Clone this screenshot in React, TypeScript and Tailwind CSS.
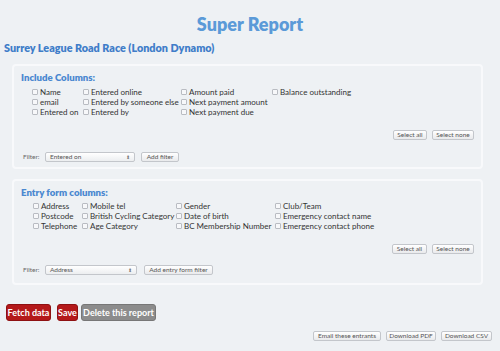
import React from "react";

const font = { fontFamily: "Lato, 'Open Sans', sans-serif" };

function Cb({ label }: { label: string }) {
  return (
    <div className="flex items-center h-[10px] whitespace-nowrap">
      <span className="inline-block w-[6px] h-[6px] rounded-[1px] border border-[#b9bcc2] bg-[#f7f8fa] mr-[2px] shrink-0" />
      <span className="text-[8px] leading-none text-[#333]">{label}</span>
    </div>
  );
}

function SmallBtn({ children, cls = "" }: { children: React.ReactNode; cls?: string }) {
  return (
    <div
      className={`h-[10px] px-[4px] flex items-center justify-center border border-[#c3c6cb] rounded-[2px] bg-gradient-to-b from-white to-[#e9eaec] text-[6.5px] leading-none text-[#555] whitespace-nowrap ${cls}`}
    >
      {children}
    </div>
  );
}

function Select({ value, w }: { value: string; w: string }) {
  return (
    <div
      className={`${w} h-[10px] flex items-center justify-between px-[4px] border border-[#c3c6cb] rounded-[2px] bg-gradient-to-b from-white to-[#eceef0] text-[6.5px] leading-none text-[#555]`}
    >
      <span>{value}</span>
      <span className="text-[5px] leading-none text-[#777]">⬍</span>
    </div>
  );
}

export default function App() {
  return (
    <div className="w-[500px] h-[351px] bg-[#eef1f4] overflow-hidden" style={font}>
      <div className="pt-[15px] text-center text-[18px] leading-[18px] font-extrabold text-[#5b9ad8]">Super Report</div>
      <div className="mt-[9px] ml-[4px] text-[10.8px] leading-[12px] font-extrabold text-[#3f7dc9]">
        Surrey League Road Race (London Dynamo)
      </div>

      {/* Box 1 */}
      <div className="mt-[10px] ml-[12px] w-[471px] h-[105px] rounded-[4px] border-2 border-[#f8f9fb] pl-[7px] pr-[7px] pt-[7px]">
        <div className="text-[9.6px] leading-[10px] font-extrabold text-[#4a88d0]">Include Columns:</div>
        <div className="mt-[4px] ml-[11px] grid grid-cols-[51px_98px_91px_auto]">
          <div>
            <Cb label="Name" />
            <Cb label="email" />
            <Cb label="Entered on" />
          </div>
          <div>
            <Cb label="Entered online" />
            <Cb label="Entered by someone else" />
            <Cb label="Entered by" />
          </div>
          <div>
            <Cb label="Amount paid" />
            <Cb label="Next payment amount" />
            <Cb label="Next payment due" />
          </div>
          <div>
            <Cb label="Balance outstanding" />
          </div>
        </div>
        <div className="mt-[13px] flex justify-end gap-[5px]">
          <SmallBtn cls="w-[34px]">Select all</SmallBtn>
          <SmallBtn cls="w-[42px]">Select none</SmallBtn>
        </div>
        <div className="mt-[12px] flex items-center">
          <span className="text-[6.5px] leading-none text-[#666] w-[22px] ml-[2px]">Filter:</span>
          <Select value="Entered on" w="w-[90px]" />
          <SmallBtn cls="ml-[6px] w-[38px]">Add filter</SmallBtn>
        </div>
      </div>

      {/* Box 2 */}
      <div className="mt-[10px] ml-[12px] w-[471px] h-[106px] rounded-[4px] border-2 border-[#f8f9fb] pl-[7px] pr-[7px] pt-[7px]">
        <div className="text-[9.6px] leading-[10px] font-extrabold text-[#4a88d0]">Entry form columns:</div>
        <div className="mt-[3px] ml-[12px] grid grid-cols-[49px_94px_99px_auto]">
          <div>
            <Cb label="Address" />
            <Cb label="Postcode" />
            <Cb label="Telephone" />
          </div>
          <div>
            <Cb label="Mobile tel" />
            <Cb label="British Cycling Category" />
            <Cb label="Age Category" />
          </div>
          <div>
            <Cb label="Gender" />
            <Cb label="Date of birth" />
            <Cb label="BC Membership Number" />
          </div>
          <div>
            <Cb label="Club/Team" />
            <Cb label="Emergency contact name" />
            <Cb label="Emergency contact phone" />
          </div>
        </div>
        <div className="mt-[13px] flex justify-end gap-[5px]">
          <SmallBtn cls="w-[35px]">Select all</SmallBtn>
          <SmallBtn cls="w-[42px]">Select none</SmallBtn>
        </div>
        <div className="mt-[11px] flex items-center">
          <span className="text-[6.5px] leading-none text-[#666] w-[22px] ml-[2px]">Filter:</span>
          <Select value="Address" w="w-[92px]" />
          <SmallBtn cls="ml-[7px] w-[69px]">Add entry form filter</SmallBtn>
        </div>
      </div>

      {/* Action buttons */}
      <div className="mt-[19px] ml-[6px] flex items-center">
        <div className="h-[17px] w-[45px] flex items-center justify-center rounded-[3px] bg-[#b4191a] border border-[#8e1112] text-white text-[9px] font-bold leading-none">
          Fetch data
        </div>
        <div className="ml-[6px] h-[17px] w-[21px] flex items-center justify-center rounded-[3px] bg-[#b4191a] border border-[#8e1112] text-white text-[9px] font-bold leading-none">
          Save
        </div>
        <div className="ml-[3px] h-[17px] w-[75px] flex items-center justify-center rounded-[3px] bg-[#8c8c8c] border border-[#777] text-white text-[9px] font-bold leading-none">
          Delete this report
        </div>
      </div>
      <div className="mt-[10px] mr-[8px] flex justify-end gap-[5px]">
        <SmallBtn cls="w-[68px]">Email these entrants</SmallBtn>
        <SmallBtn cls="w-[50px]">Download PDF</SmallBtn>
        <SmallBtn cls="w-[51px]">Download CSV</SmallBtn>
      </div>
    </div>
  );
}
